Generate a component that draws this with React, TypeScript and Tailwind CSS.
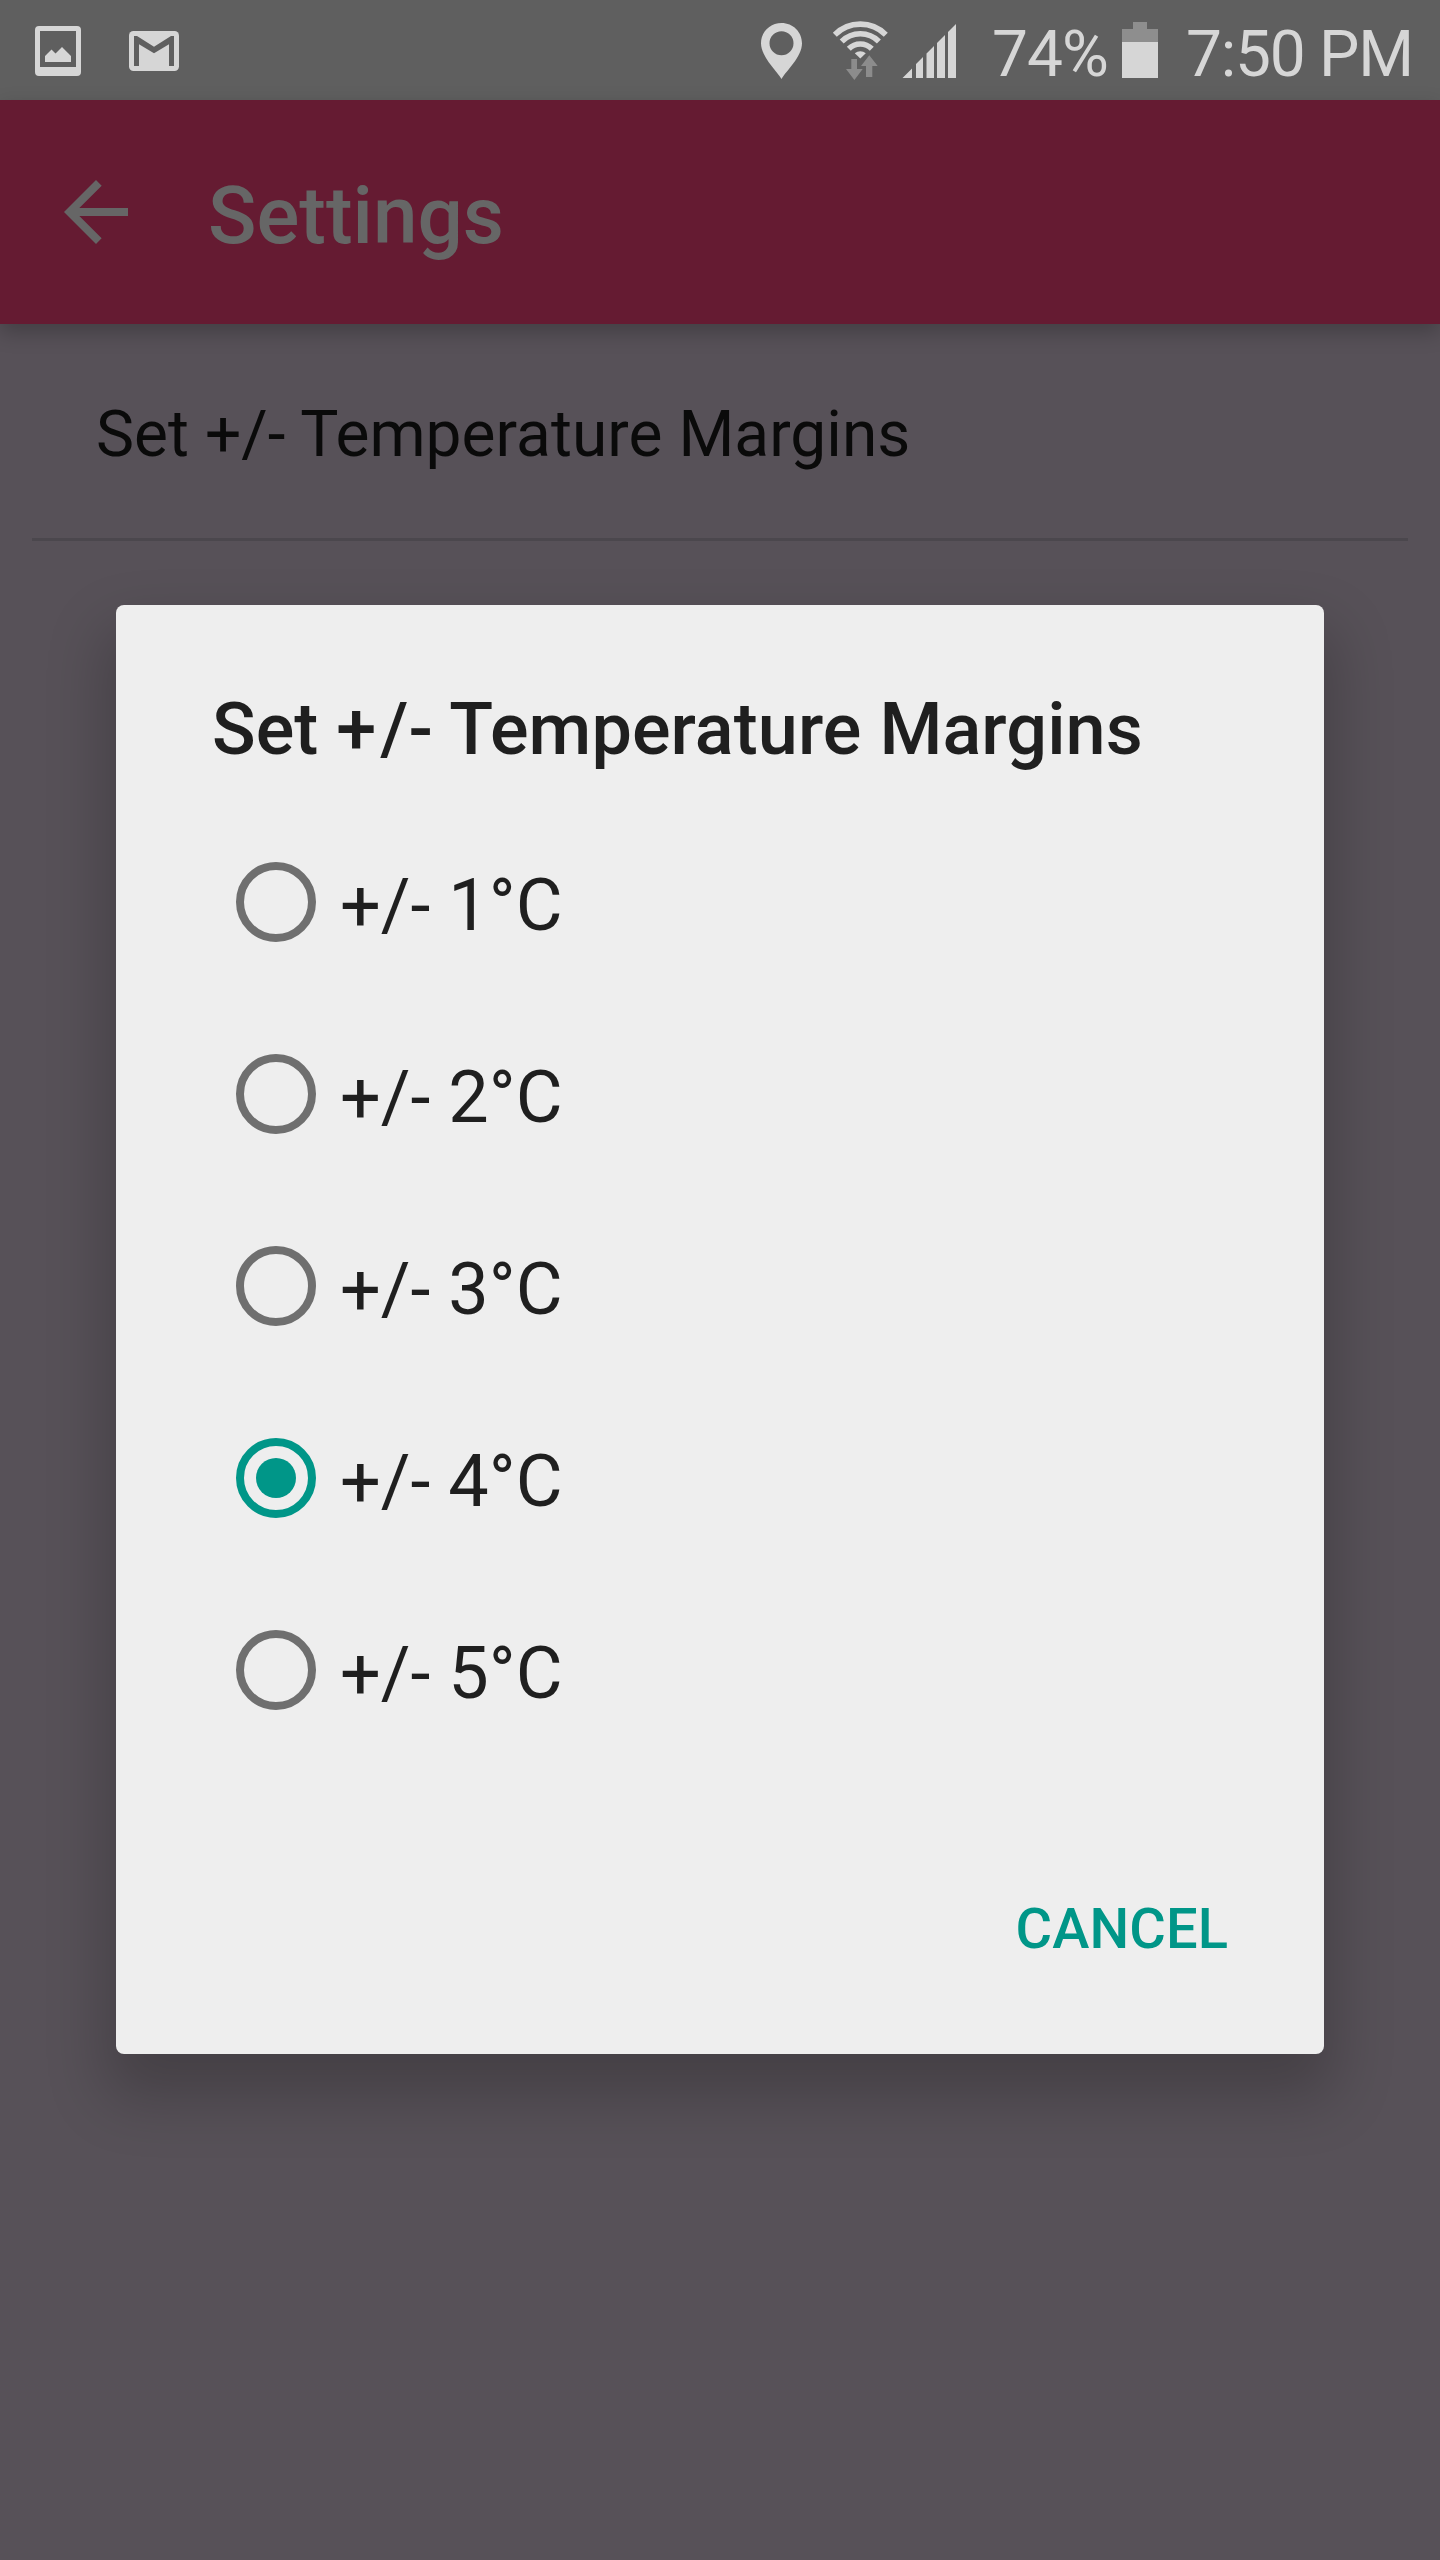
const options = ["+/- 1°C", "+/- 2°C", "+/- 3°C", "+/- 4°C", "+/- 5°C"];
const selected = 3;

function StatusBar() {
  return (
    <div className="flex h-[100px] items-center bg-[#5f5f5f] text-[64px] leading-[100px] text-[#d6d6d6]">
      <svg className="ml-[35px] h-[100px] w-[46px] shrink-0" viewBox="35 0 46 100" fill="#d6d6d6">
        <path
          fillRule="evenodd"
          d="M39 26h38a4 4 0 0 1 4 4v42a4 4 0 0 1-4 4H39a4 4 0 0 1-4-4V30a4 4 0 0 1 4-4zM40 31v36h36V31z"
        />
        <path d="M45 62V56l6.500-6.500 4 4L62 47l9 9v6z" />
      </svg>
      <svg className="ml-12 h-[100px] w-[50px] shrink-0" viewBox="129 0 50 100">
        <rect x="129" y="31" width="50" height="40" rx="4.5" fill="#d6d6d6" />
        <path
          d="M134 36h3l17 10.700L171 36h3v30h-5V44.300L154 53.300l-15-9V66h-5z"
          fill="#5f5f5f"
        />
      </svg>
      <svg className="ml-auto h-[100px] w-[42px] shrink-0" viewBox="761 0 42 100">
        <path
          fillRule="evenodd"
          d="M781.500 23c-11.500 0-20.500 9-20.500 20.300C761 57 777 71 781.500 79 786 71 802 57 802 43.300 802 32 793 23 781.500 23zm0 8.300a12 12 0 1 1 0 24 12 12 0 0 1 0-24z"
          fill="#d6d6d6"
        />
      </svg>
      <svg className="ml-[29px] h-[100px] w-[56px] shrink-0" viewBox="832 0 56 100">
        <g fill="none" stroke="#d6d6d6" strokeWidth="5.6">
          <path d="M834.800 34.700a36 36 0 0 1 51 0" />
          <path d="M841.700 41.500a26.300 26.300 0 0 1 37.200 0" />
          <path d="M848.800 48.700a16.300 16.300 0 0 1 23 0" />
        </g>
        <path d="M854.800 53.300a8.500 8.500 0 0 1 11 0l-5.500 5.200z" fill="#d6d6d6" />
        <path
          d="M851.300 59h5.700v10h5.700l-8.300 11-8.400-11h5.300zM869.300 55.300l8.400 10.700h-5.400v11H866V66h-5z"
          fill="#8c8c8c"
        />
      </svg>
      <svg className="ml-[14px] h-[100px] w-[54px] shrink-0" viewBox="902 0 54 100" fill="#d6d6d6">
        <path d="M902.500 78l9.500-9.500V78zM916 78V64l7-7v21zM926.500 78V53.500l7.500-7.500v32zM937 78V43l8-8v43zM948 78V32l8-8v54z" />
      </svg>
      <span className="ml-[36px] mt-[9px] w-[130px] whitespace-nowrap tracking-[-1px]">74%</span>
      <svg className="h-[100px] w-9 shrink-0" viewBox="0 0 36 100">
        <path d="M11 22h14v7h11v13H0V29h11z" fill="#8e8e8e" />
        <path d="M0 42h36v36H0z" fill="#d6d6d6" />
      </svg>
      <span className="ml-7 mt-[9px] w-[254px] whitespace-nowrap tracking-[-1.25px]">7:50 PM</span>
    </div>
  );
}

function Radio({ checked }: { checked: boolean }) {
  return (
    <span
      className={`flex size-20 shrink-0 items-center justify-center rounded-full border-8 ${
        checked ? "border-[#009688]" : "border-[#6f6f6f]"
      }`}
    >
      {checked && <span className="size-10 rounded-full bg-[#009688]" />}
    </span>
  );
}

function MarginsDialog() {
  return (
    <div
      role="dialog"
      className="absolute left-[116px] top-[605px] flex h-[1449px] w-[1208px] flex-col rounded-lg bg-[#eeeeee] text-[#1f1f1f] shadow-[0_34px_60px_10px_rgba(0,0,0,0.21)]"
    >
      <h2 className="ml-24 mt-[83px] whitespace-nowrap text-[72px] font-medium leading-[84px] tracking-[0.08px]">
        Set <span className="tracking-[4px]">+</span>/- Temperature Margins
      </h2>
      <div className="ml-[120px] mt-[34px]">
        {options.map((option, i) => (
          <button key={option} className="flex h-48 items-center">
            <Radio checked={i === selected} />
            <span className="ml-6 mt-2 text-[72px] leading-[84px]">{option}</span>
          </button>
        ))}
      </div>
      <button className="ml-auto mr-24 mt-[130px] text-[56px] font-medium leading-[66px] tracking-[0.1px] text-[#009688]">
        CANCEL
      </button>
    </div>
  );
}

export default function App() {
  return (
    <div className="relative h-[2560px] w-[1440px] overflow-hidden bg-[#575158] font-[Roboto,sans-serif]">
      <StatusBar />
      <header className="flex h-[224px] items-center bg-[#651b32] text-[#666666] shadow-[0_8px_20px_rgba(0,0,0,0.24)]">
        <svg className="ml-12 size-24" viewBox="0 0 24 24" fill="currentColor">
          <path d="M20 11H7.830l5.590-5.590L12 4l-8 8 8 8 1.410-1.410L7.830 13H20z" />
        </svg>
        <h1 className="ml-16 mt-2 text-[80px] font-medium leading-[94px]">Settings</h1>
      </header>
      <div className="mx-8 flex h-[217px] items-center border-b-[3px] border-[#4b474d] px-16 pt-[7px] text-[64px] tracking-[0.06px] text-[#0a0a0a]">
        Set +/- Temperature Margins
      </div>
      <MarginsDialog />
    </div>
  );
}
